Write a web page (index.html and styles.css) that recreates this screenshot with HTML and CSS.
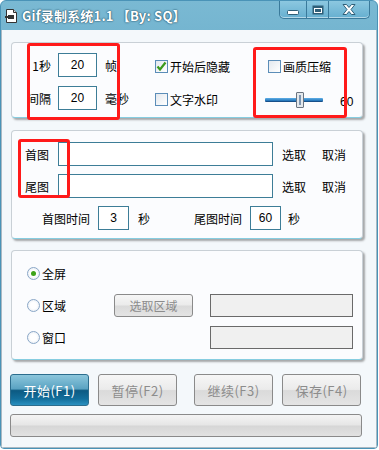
FILE: index.html
```html
<!DOCTYPE html>
<html lang="zh-CN">
<head>
    <meta charset="UTF-8">
    <title>Gif录制系统1.1</title>
    <link rel="stylesheet" href="styles.css">
</head>
<body>
    <div class="window">
        <div class="titlebar">
            <svg class="app-icon" width="13" height="14" viewBox="0 0 13 14">
                <path d="M1.5 0.5 H8.5 L11.5 3.5 V13.5 H1.5 Z" fill="#fff" stroke="#333"/>
                <path d="M8.5 0.5 V3.5 H11.5" fill="#ddd" stroke="#333"/>
                <rect x="3" y="6" width="6" height="4" fill="#333"/>
                <rect x="0" y="7" width="4" height="2" fill="#333"/>
            </svg>
            <span class="title">Gif录制系统1.1 【By: SQ】</span>
            <div class="controls">
                <span class="ctl ctl-min">
                    <svg width="12" height="5" viewBox="0 0 12 5"><rect x="0.5" y="0.5" width="11" height="4" rx="1" fill="#fff" stroke="#2f5f78"/></svg>
                </span>
                <span class="ctl ctl-max">
                    <svg width="12" height="10" viewBox="0 0 12 10"><rect x="0.5" y="0.5" width="11" height="9" fill="#2f5f78"/><rect x="2" y="3" width="8" height="5" fill="#fff"/><rect x="3" y="4" width="6" height="3" fill="#2f5f78"/></svg>
                </span>
                <span class="ctl ctl-close">
                    <svg width="14" height="11" viewBox="0 0 14 11"><path d="M1 0.5 H4.5 L7 3.5 L9.5 0.5 H13 L9 5.5 L13 10.5 H9.5 L7 7.5 L4.5 10.5 H1 L5 5.5 Z" fill="#fff" stroke="#2f5f78" stroke-linejoin="round"/></svg>
                </span>
            </div>
        </div>

        <div class="client">
            <div class="group group-rate">
                <span class="lbl">1秒</span>
                <span class="field num">20</span>
                <span class="unit">帧</span>
                <label class="check"><span class="box checked"><svg width="11" height="11" viewBox="0 0 11 11"><path d="M1.5 5.5 L4 8.5 L9.5 1.5" fill="none" stroke="#3a9a1c" stroke-width="2.2"/></svg></span>开始后隐藏</label>
                <label class="check check-right"><span class="box"></span>画质压缩</label>

                <span class="lbl">间隔</span>
                <span class="field num">20</span>
                <span class="unit">毫秒</span>
                <label class="check"><span class="box"></span>文字水印</label>
                <div class="slider-row">
                    <div class="slider"><span class="track"></span><span class="thumb"></span></div>
                    <span class="slider-val">60</span>
                </div>

                <span class="mark mark-a"></span>
                <span class="mark mark-b"></span>
            </div>

            <div class="group group-img">
                <div class="img-row">
                    <span class="img-lbl">首图</span>
                    <span class="field wide"></span>
                    <span class="link">选取</span>
                    <span class="link">取消</span>
                </div>
                <div class="img-row">
                    <span class="img-lbl">尾图</span>
                    <span class="field wide"></span>
                    <span class="link">选取</span>
                    <span class="link">取消</span>
                </div>
                <div class="time-row">
                    <span>首图时间</span>
                    <span class="field small num">3</span>
                    <span class="sec">秒</span>
                    <span class="time-two">尾图时间</span>
                    <span class="field small num">60</span>
                    <span class="sec sec-two">秒</span>
                </div>
                <span class="mark mark-c"></span>
            </div>

            <div class="group group-area">
                <label class="radio"><span class="dot on"></span>全屏</label>
                <span></span>
                <span></span>

                <label class="radio"><span class="dot"></span>区域</label>
                <span class="btn btn-off btn-pick">选取区域</span>
                <span class="field gray"></span>

                <label class="radio"><span class="dot"></span>窗口</label>
                <span></span>
                <span class="field gray"></span>
            </div>

            <div class="actions">
                <span class="btn btn-main">开始(F1)</span>
                <span class="btn btn-off">暂停(F2)</span>
                <span class="btn btn-off btn-gap">继续(F3)</span>
                <span class="btn btn-off">保存(F4)</span>
            </div>

            <div class="progress"></div>
        </div>
    </div>
</body>
</html>
```

FILE: styles.css
```css
* {
    box-sizing: border-box;
}

body {
    margin: 0;
    background: #ffffff;
    font-family: "Noto Sans CJK SC", "Liberation Sans", sans-serif;
    font-size: 12px;
    color: #000;
}

.window {
    width: 378px;
    height: 449px;
    border: 1px solid #4a93b7;
    border-radius: 6px 6px 4px 4px;
    overflow: hidden;
    background: linear-gradient(#7ab9d3, #5aa2c2 40%, #4a97bb);
}

/* title bar */
.titlebar {
    height: 29px;
    display: flex;
    align-items: center;
    padding-left: 4px;
    padding-top: 1px;
}

.app-icon {
    flex: none;
}

.title {
    margin-left: 4px;
    color: #fff;
    font-weight: bold;
    font-size: 13px;
    line-height: 16px;
    letter-spacing: 0.2px;
    text-shadow: 0 0 2px #1d4c63, 0 0 1px #1d4c63;
}

.controls {
    margin-left: auto;
    margin-right: 7px;
    align-self: flex-start;
    margin-top: -1px;
    display: flex;
    height: 18px;
    border: 1px solid #3a7a9b;
    border-top: none;
    border-radius: 0 0 5px 5px;
    overflow: hidden;
    background: linear-gradient(#8cc8e0, #66afd0);
    box-shadow: inset 0 -1px 0 rgba(255, 255, 255, 0.5);
}

.ctl {
    display: flex;
    align-items: center;
    justify-content: center;
    height: 17px;
}

.ctl-min {
    width: 27px;
    border-right: 1px solid #3a7a9b;
    padding-top: 5px;
}

.ctl-max {
    width: 22px;
    border-right: 1px solid #3a7a9b;
}

.ctl-close {
    width: 40px;
}

/* client area */
.client {
    height: 418px;
    background: #f4f8fb;
    border: 1px solid #aab9c3;
    border-top: none;
    padding: 12px 0 0 9px;
}

.group {
    position: relative;
    width: 352px;
    background: #fbfcfe;
    border: 1px solid #c9d0d6;
    border-bottom-color: #86cde0;
    border-radius: 4px;
    box-shadow: 2px 2px 2px rgba(70, 70, 70, 0.45);
}

.field {
    display: block;
    height: 24px;
    background: #fff;
    border: 1px solid #3d7d97;
}

.num {
    font-family: "Liberation Sans", sans-serif;
    font-size: 12px;
    line-height: 22px;
    text-align: center;
}

/* group 1 */
.group-rate {
    height: 76px;
    margin-bottom: 12px;
    display: grid;
    grid-template-columns: 43px 47px 50px 110px 1fr;
    grid-template-rows: 24px 24px;
    row-gap: 9px;
    align-items: center;
    padding: 10px 0 0 3px;
}

.lbl {
    text-align: right;
    padding-right: 7px;
}

.group-rate .field {
    width: 39px;
}

.check {
    display: flex;
    align-items: center;
    white-space: nowrap;
    padding-top: 2px;
}

.check-right {
    margin-left: 3px;
}

.box {
    width: 13px;
    height: 13px;
    margin-right: 2px;
    border: 1px solid #5b8db8;
    background: linear-gradient(135deg, #e3e8ee, #ffffff);
    display: flex;
    align-items: center;
    justify-content: center;
}

.slider-row {
    display: flex;
    align-items: center;
    padding-top: 3px;
}

.slider {
    position: relative;
    width: 58px;
    height: 16px;
}

.track {
    position: absolute;
    left: 0;
    right: 0;
    top: 6px;
    height: 4px;
    border-radius: 1px;
    background: linear-gradient(#5fb0e8, #1e6fb4);
    border-bottom: 1px solid #17508a;
}

.thumb {
    position: absolute;
    left: 31px;
    top: 0;
    width: 8px;
    height: 16px;
    border: 1px solid #6a7480;
    border-radius: 1px;
    background: #e4e8ec;
    box-shadow: inset 2px 2px 0 #e4e8ec, inset -2px -2px 0 #e4e8ec, inset 0 0 0 4px #7d95b0;
}

.slider-val {
    margin-left: 17px;
    padding-top: 4px;
    font-family: "Liberation Sans", sans-serif;
}

/* red annotation frames */
.mark {
    position: absolute;
    border: 3px solid #ff1a1a;
    border-radius: 3px;
    pointer-events: none;
}

.mark-a {
    left: 15px;
    top: 0;
    width: 93px;
    height: 77px;
}

.mark-b {
    left: 241px;
    top: 4px;
    width: 94px;
    height: 71px;
}

.mark-c {
    left: 6px;
    top: 8px;
    width: 52px;
    height: 59px;
}

/* group 2 */
.group-img {
    height: 109px;
    margin-bottom: 11px;
    padding: 11px 0 0 13px;
}

.img-row {
    display: flex;
    align-items: center;
    height: 24px;
    margin-bottom: 8px;
}

.img-lbl {
    width: 33px;
}

.wide {
    width: 215px;
    margin-right: 9px;
}

.link {
    width: 40px;
}

.time-row {
    display: flex;
    align-items: center;
    height: 24px;
    padding-left: 17px;
}

.small {
    width: 31px;
    margin-left: 8px;
}

.sec {
    margin-left: 9px;
}

.time-two {
    margin-left: 44px;
}

.time-row .small + .sec-two {
    margin-left: 7px;
}

/* group 3 */
.group-area {
    height: 110px;
    margin-bottom: 14px;
    display: grid;
    grid-template-columns: 87px 79px 160px;
    grid-template-rows: repeat(3, 23px);
    row-gap: 9px;
    align-items: center;
    padding: 11px 0 0 15px;
}

.group-area .gray {
    width: 143px;
    height: 23px;
    margin-left: 17px;
    background: #f0f0f0;
    border-color: #6a6a6a;
}

.radio {
    display: flex;
    align-items: center;
}

.dot {
    width: 13px;
    height: 13px;
    margin-right: 2px;
    border-radius: 50%;
    border: 1px solid #8aa7c7;
    background: radial-gradient(circle, #ffffff 40%, #dfe7f0);
    display: flex;
    align-items: center;
    justify-content: center;
}

.dot.on::after {
    content: "";
    width: 5px;
    height: 5px;
    border-radius: 50%;
    background: #3ea41a;
}

/* buttons */
.btn {
    display: flex;
    align-items: center;
    justify-content: center;
    border-radius: 3px;
    white-space: nowrap;
}

.btn-off {
    border: 1px solid #8a8a8a;
    color: #8c8c8c;
    background: linear-gradient(#f6f6f6, #ebebeb 48%, #dadada 52%, #e4e4e4);
}

.btn-pick {
    height: 23px;
}

.actions {
    display: flex;
    margin-left: -1px;
    height: 32px;
    margin-bottom: 8px;
}

.actions .btn {
    width: 79px;
    margin-right: 9px;
    font-size: 13px;
    letter-spacing: 0.5px;
}

.actions .btn-gap {
    margin-left: 8px;
}

.btn-main {
    color: #fff;
    border: 1px solid #2c6d8d;
    background: linear-gradient(#8cc6dc, #5aa3c2 46%, #0c5a82 52%, #136f9c 80%, #2a90c0);
}

.progress {
    margin-left: -1px;
    width: 352px;
    height: 23px;
    border: 1px solid #8a8a8a;
    border-radius: 3px;
    background: linear-gradient(#f4f4f4, #e6e6e6 48%, #d6d6d6 52%, #e2e2e2);
}
```
